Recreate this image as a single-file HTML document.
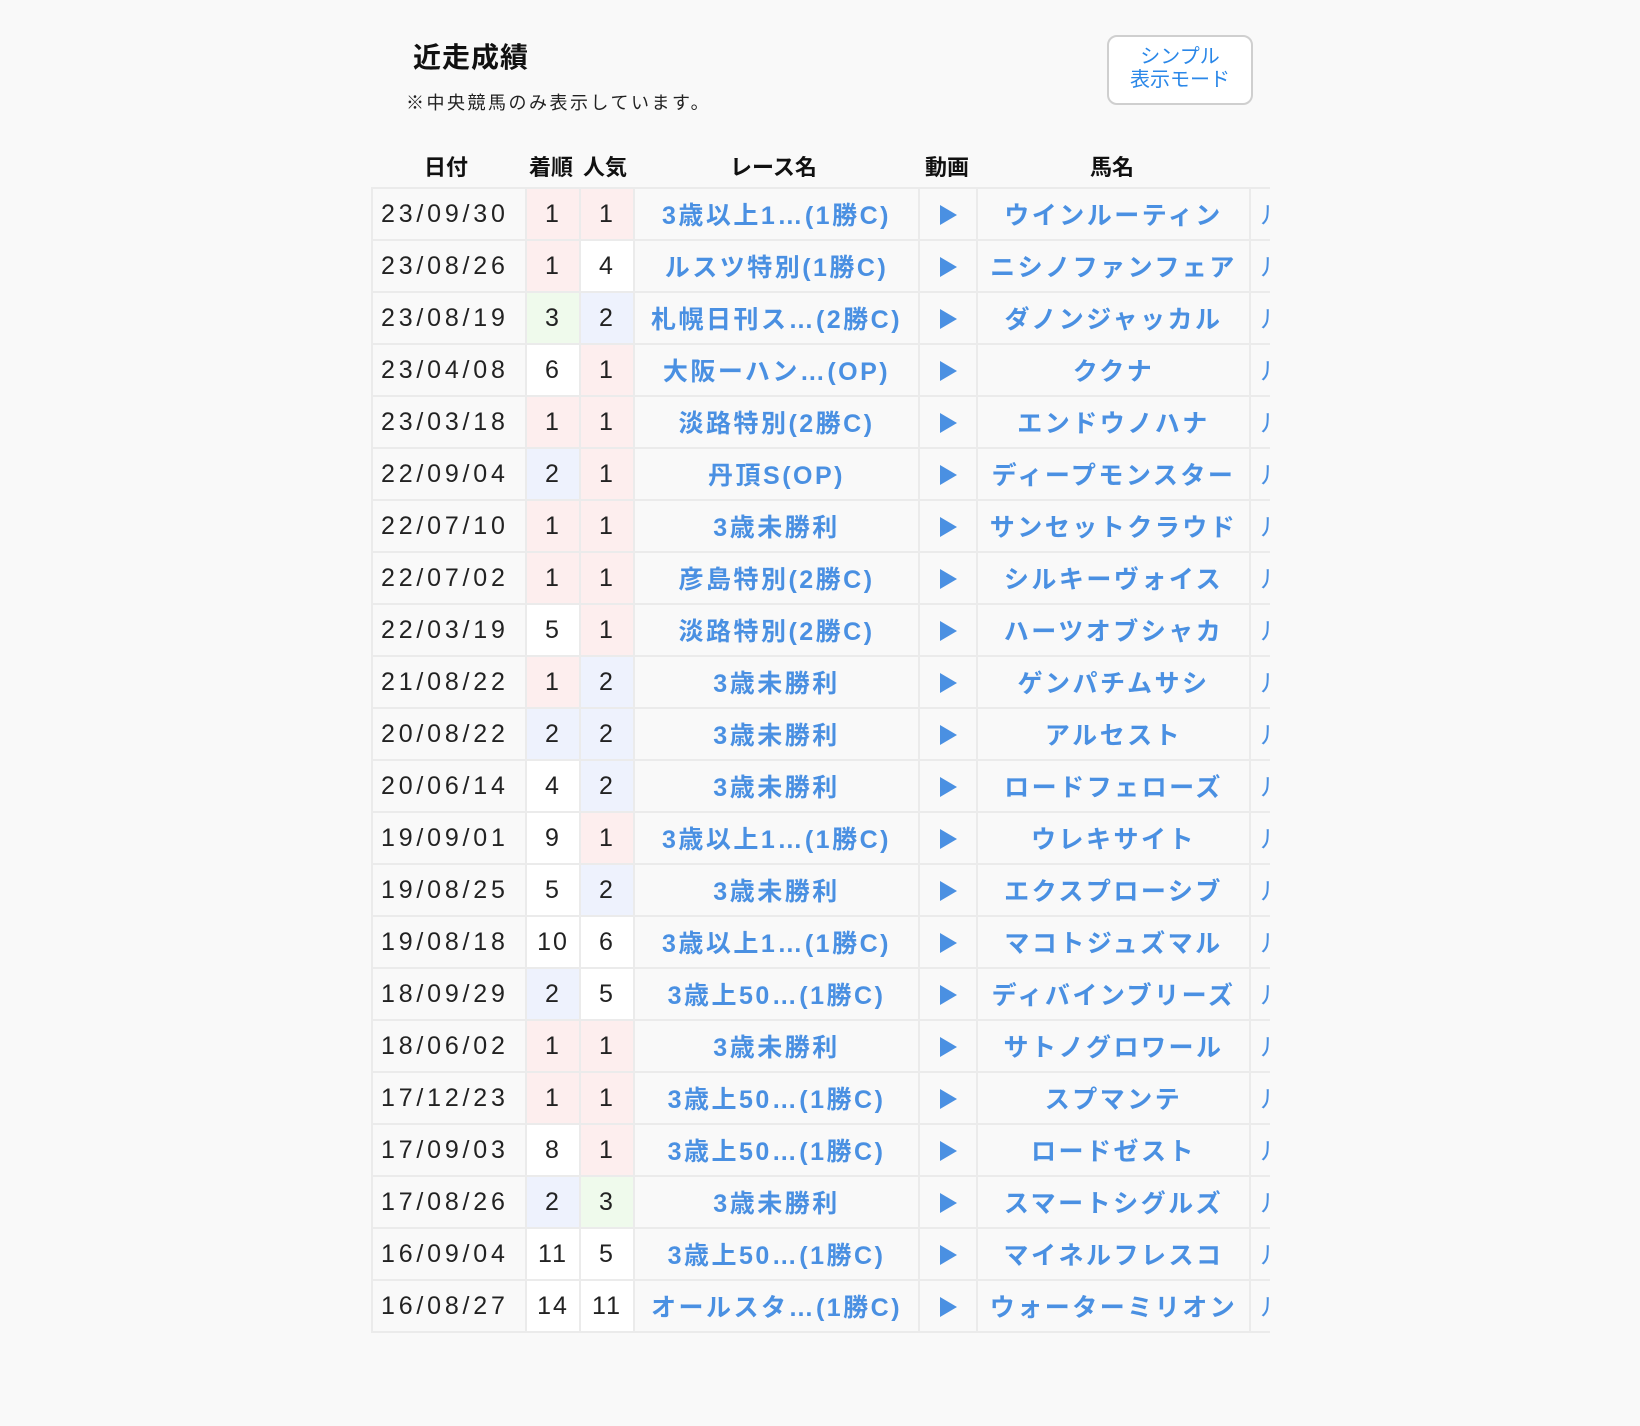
<!DOCTYPE html>
<html><head><meta charset="utf-8"><style>
html,body{margin:0;padding:0;background:#f9f9f9;width:1640px;height:1426px;overflow:hidden;font-family:"Liberation Sans","Noto Sans CJK JP",sans-serif;}
.title{position:absolute;left:413px;top:36px;font-size:28px;font-weight:bold;color:#111;letter-spacing:1px;}
.note{position:absolute;left:406px;top:89px;font-size:18px;color:#222;letter-spacing:2.5px;}
.btn{position:absolute;left:1107px;top:35px;width:142px;height:66px;border:2px solid #cfcfcf;border-radius:10px;background:#fff;color:#2a87e8;font-size:20px;line-height:23px;text-align:center;}
.btn div:first-child{margin-top:9px;}
.hdr{position:absolute;top:150px;font-size:22px;font-weight:bold;color:#111;}
.wrap{position:absolute;left:371px;top:187px;width:899px;overflow:hidden;}
table{border-collapse:collapse;table-layout:fixed;width:940px;}
td{border:2px solid #ebebeb;height:50px;padding:0;text-align:center;font-size:25px;color:#222;letter-spacing:2px;white-space:nowrap;overflow:hidden;background:#f9f9f9;}
td.d{text-align:left;padding-left:8px;letter-spacing:3.8px;}
td.b{color:#4a90e2;font-weight:bold;letter-spacing:2.5px;}
td.j{border-right:none;text-align:left;padding-left:9px;color:#4a90e2;}
.p{background:#fdeeee}.u{background:#eef2fd}.g{background:#effaec}.w{background:#fff}
.tri{display:inline-block;width:0;height:0;border-top:10px solid transparent;border-bottom:10px solid transparent;border-left:17px solid #4a90e2;vertical-align:middle;}
</style></head><body>
<div class="title">近走成績</div>
<div class="note">※中央競馬のみ表示しています。</div>
<div class="btn"><div>シンプル</div><div>表示モード</div></div>
<div class="hdr" style="left:424px">日付</div>
<div class="hdr" style="left:529px">着順</div>
<div class="hdr" style="left:583px">人気</div>
<div class="hdr" style="left:730px">レース名</div>
<div class="hdr" style="left:925px">動画</div>
<div class="hdr" style="left:1090px">馬名</div>
<div class="wrap">
<table>
<colgroup><col style="width:154px"><col style="width:54px"><col style="width:54px"><col style="width:285px"><col style="width:58px"><col style="width:273px"><col style="width:62px"></colgroup>
<tbody>
<tr><td class="d">23/09/30</td><td class="p">1</td><td class="p">1</td><td class="b">3歳以上1…(1勝C)</td><td><span class="tri"></span></td><td class="b">ウインルーティン</td><td class="j">ル</td></tr>
<tr><td class="d">23/08/26</td><td class="p">1</td><td class="w">4</td><td class="b">ルスツ特別(1勝C)</td><td><span class="tri"></span></td><td class="b">ニシノファンフェア</td><td class="j">ル</td></tr>
<tr><td class="d">23/08/19</td><td class="g">3</td><td class="u">2</td><td class="b">札幌日刊ス…(2勝C)</td><td><span class="tri"></span></td><td class="b">ダノンジャッカル</td><td class="j">ル</td></tr>
<tr><td class="d">23/04/08</td><td class="w">6</td><td class="p">1</td><td class="b">大阪ーハン…(OP)</td><td><span class="tri"></span></td><td class="b">ククナ</td><td class="j">ル</td></tr>
<tr><td class="d">23/03/18</td><td class="p">1</td><td class="p">1</td><td class="b">淡路特別(2勝C)</td><td><span class="tri"></span></td><td class="b">エンドウノハナ</td><td class="j">ル</td></tr>
<tr><td class="d">22/09/04</td><td class="u">2</td><td class="p">1</td><td class="b">丹頂S(OP)</td><td><span class="tri"></span></td><td class="b">ディープモンスター</td><td class="j">ル</td></tr>
<tr><td class="d">22/07/10</td><td class="p">1</td><td class="p">1</td><td class="b">3歳未勝利</td><td><span class="tri"></span></td><td class="b">サンセットクラウド</td><td class="j">ル</td></tr>
<tr><td class="d">22/07/02</td><td class="p">1</td><td class="p">1</td><td class="b">彦島特別(2勝C)</td><td><span class="tri"></span></td><td class="b">シルキーヴォイス</td><td class="j">ル</td></tr>
<tr><td class="d">22/03/19</td><td class="w">5</td><td class="p">1</td><td class="b">淡路特別(2勝C)</td><td><span class="tri"></span></td><td class="b">ハーツオブシャカ</td><td class="j">ル</td></tr>
<tr><td class="d">21/08/22</td><td class="p">1</td><td class="u">2</td><td class="b">3歳未勝利</td><td><span class="tri"></span></td><td class="b">ゲンパチムサシ</td><td class="j">ル</td></tr>
<tr><td class="d">20/08/22</td><td class="u">2</td><td class="u">2</td><td class="b">3歳未勝利</td><td><span class="tri"></span></td><td class="b">アルセスト</td><td class="j">ル</td></tr>
<tr><td class="d">20/06/14</td><td class="w">4</td><td class="u">2</td><td class="b">3歳未勝利</td><td><span class="tri"></span></td><td class="b">ロードフェローズ</td><td class="j">ル</td></tr>
<tr><td class="d">19/09/01</td><td class="w">9</td><td class="p">1</td><td class="b">3歳以上1…(1勝C)</td><td><span class="tri"></span></td><td class="b">ウレキサイト</td><td class="j">ル</td></tr>
<tr><td class="d">19/08/25</td><td class="w">5</td><td class="u">2</td><td class="b">3歳未勝利</td><td><span class="tri"></span></td><td class="b">エクスプローシブ</td><td class="j">ル</td></tr>
<tr><td class="d">19/08/18</td><td class="w">10</td><td class="w">6</td><td class="b">3歳以上1…(1勝C)</td><td><span class="tri"></span></td><td class="b">マコトジュズマル</td><td class="j">ル</td></tr>
<tr><td class="d">18/09/29</td><td class="u">2</td><td class="w">5</td><td class="b">3歳上50…(1勝C)</td><td><span class="tri"></span></td><td class="b">ディバインブリーズ</td><td class="j">ル</td></tr>
<tr><td class="d">18/06/02</td><td class="p">1</td><td class="p">1</td><td class="b">3歳未勝利</td><td><span class="tri"></span></td><td class="b">サトノグロワール</td><td class="j">ル</td></tr>
<tr><td class="d">17/12/23</td><td class="p">1</td><td class="p">1</td><td class="b">3歳上50…(1勝C)</td><td><span class="tri"></span></td><td class="b">スプマンテ</td><td class="j">ル</td></tr>
<tr><td class="d">17/09/03</td><td class="w">8</td><td class="p">1</td><td class="b">3歳上50…(1勝C)</td><td><span class="tri"></span></td><td class="b">ロードゼスト</td><td class="j">ル</td></tr>
<tr><td class="d">17/08/26</td><td class="u">2</td><td class="g">3</td><td class="b">3歳未勝利</td><td><span class="tri"></span></td><td class="b">スマートシグルズ</td><td class="j">ル</td></tr>
<tr><td class="d">16/09/04</td><td class="w">11</td><td class="w">5</td><td class="b">3歳上50…(1勝C)</td><td><span class="tri"></span></td><td class="b">マイネルフレスコ</td><td class="j">ル</td></tr>
<tr><td class="d">16/08/27</td><td class="w">14</td><td class="w">11</td><td class="b">オールスタ…(1勝C)</td><td><span class="tri"></span></td><td class="b">ウォーターミリオン</td><td class="j">ル</td></tr>
</tbody></table>
</div>
</body></html>
